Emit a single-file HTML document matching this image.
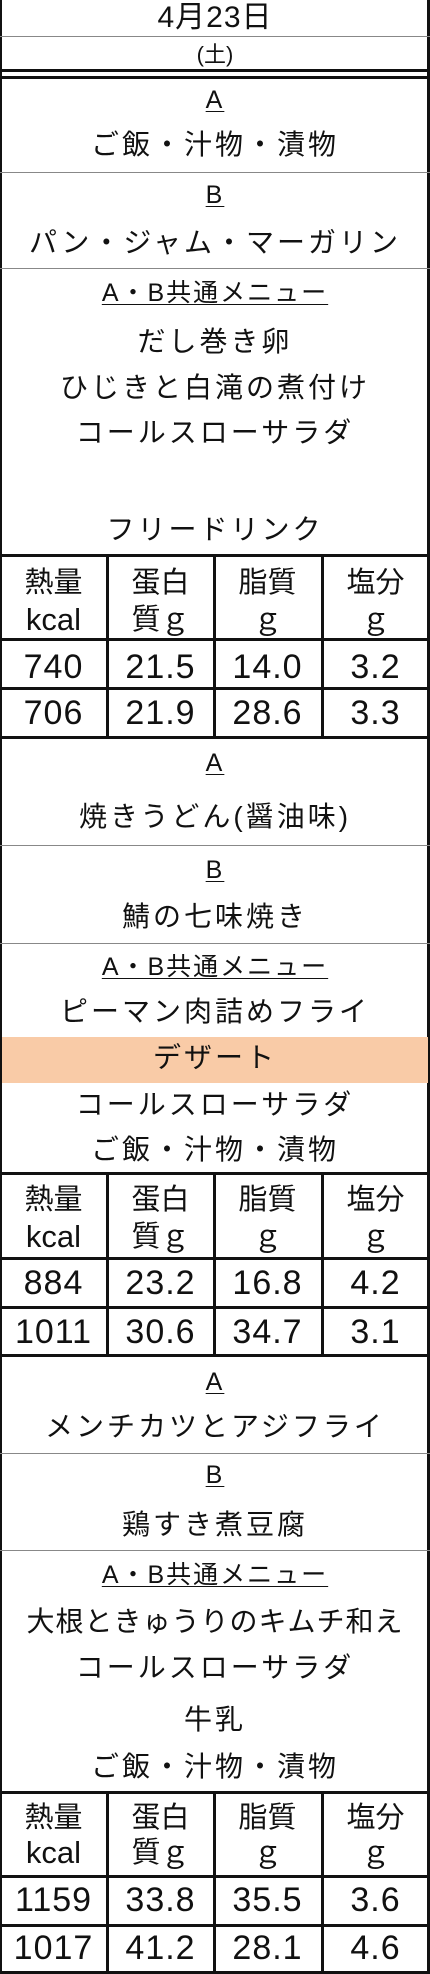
<!DOCTYPE html>
<html><head><meta charset="utf-8"><style>
body{margin:0;width:430px;height:1974px;background:#fff;position:relative;overflow:hidden;font-family:"Liberation Sans","Noto Sans CJK JP",sans-serif;color:#111}
.t{position:absolute;left:0;width:430px;text-align:center;height:40px;line-height:40px;font-size:28px;letter-spacing:3px;white-space:nowrap}
.l{font-size:25px;letter-spacing:2px}
.l span{text-decoration:underline;text-decoration-thickness:1px;text-underline-offset:3px}
.h{position:absolute;left:0;width:430px;height:1px;background:#888}
.k{position:absolute;left:0;width:430px;height:3px;background:#111}
.v{position:absolute;width:3px;background:#111}
.c{position:absolute;width:107px;text-align:center;height:40px;line-height:40px;font-size:29px;white-space:nowrap}
.n{font-size:34px;letter-spacing:1px}
.or{position:absolute;left:2px;width:426px;background:#f9cba7}
</style></head><body>
<div class="v" style="left:0;top:0;height:1974px;width:2px"></div>
<div class="v" style="left:427px;top:0;height:1974px"></div>
<div class="t" style="top:-2px;font-size:30px;letter-spacing:1px">4月23日</div>
<div class="h" style="top:36px"></div>
<div class="t" style="top:35px;font-size:22px;letter-spacing:0">(土)</div>
<div class="k" style="top:69px"></div>
<div class="k" style="top:76px"></div>

<div class="t l" style="top:80px"><span>A</span></div>
<div class="t" style="top:125px">ご飯・汁物・漬物</div>
<div class="h" style="top:172px"></div>
<div class="t l" style="top:175px"><span>B</span></div>
<div class="t" style="top:223px">パン・ジャム・マーガリン</div>
<div class="h" style="top:268px"></div>
<div class="t l" style="top:273px"><span>A・B共通メニュー</span></div>
<div class="t" style="top:322px">だし巻き卵</div>
<div class="t" style="top:368px">ひじきと白滝の煮付け</div>
<div class="t" style="top:413px">コールスローサラダ</div>
<div class="t" style="top:510px">フリードリンク</div>
<div class="k" style="top:554px"></div>

<div class="c" style="left:0;top:563px">熱量</div><div class="c" style="left:0;top:600px;font-size:31px">kcal</div>
<div class="c" style="left:107px;top:563px">蛋白</div><div class="c" style="left:107px;top:600px">質ｇ</div>
<div class="c" style="left:214px;top:563px">脂質</div><div class="c" style="left:214px;top:600px">ｇ</div>
<div class="c" style="left:322px;top:563px">塩分</div><div class="c" style="left:322px;top:600px">ｇ</div>
<div class="k" style="top:638px"></div>
<div class="c n" style="left:0;top:647px">740</div><div class="c n" style="left:107px;top:647px">21.5</div><div class="c n" style="left:214px;top:647px">14.0</div><div class="c n" style="left:322px;top:647px">3.2</div>
<div class="k" style="top:687px"></div>
<div class="c n" style="left:0;top:693px">706</div><div class="c n" style="left:107px;top:693px">21.9</div><div class="c n" style="left:214px;top:693px">28.6</div><div class="c n" style="left:322px;top:693px">3.3</div>
<div class="k" style="top:736px"></div>
<div class="v" style="left:106px;top:554px;height:184px"></div>
<div class="v" style="left:213px;top:554px;height:184px"></div>
<div class="v" style="left:321px;top:554px;height:184px"></div>

<div class="t l" style="top:743px"><span>A</span></div>
<div class="t" style="top:797px">焼きうどん(醤油味)</div>
<div class="h" style="top:845px"></div>
<div class="t l" style="top:850px"><span>B</span></div>
<div class="t" style="top:897px">鯖の七味焼き</div>
<div class="h" style="top:943px"></div>
<div class="t l" style="top:947px"><span>A・B共通メニュー</span></div>
<div class="t" style="top:992px">ピーマン肉詰めフライ</div>
<div class="or" style="top:1037px;height:46px"></div>
<div class="t" style="top:1038px">デザート</div>
<div class="t" style="top:1085px">コールスローサラダ</div>
<div class="t" style="top:1130px">ご飯・汁物・漬物</div>
<div class="k" style="top:1172px"></div>

<div class="c" style="left:0;top:1180px">熱量</div><div class="c" style="left:0;top:1217px;font-size:31px">kcal</div>
<div class="c" style="left:107px;top:1180px">蛋白</div><div class="c" style="left:107px;top:1217px">質ｇ</div>
<div class="c" style="left:214px;top:1180px">脂質</div><div class="c" style="left:214px;top:1217px">ｇ</div>
<div class="c" style="left:322px;top:1180px">塩分</div><div class="c" style="left:322px;top:1217px">ｇ</div>
<div class="k" style="top:1257px"></div>
<div class="c n" style="left:0;top:1263px">884</div><div class="c n" style="left:107px;top:1263px">23.2</div><div class="c n" style="left:214px;top:1263px">16.8</div><div class="c n" style="left:322px;top:1263px">4.2</div>
<div class="k" style="top:1306px"></div>
<div class="c n" style="left:0;top:1312px">1011</div><div class="c n" style="left:107px;top:1312px">30.6</div><div class="c n" style="left:214px;top:1312px">34.7</div><div class="c n" style="left:322px;top:1312px">3.1</div>
<div class="k" style="top:1354px"></div>
<div class="v" style="left:106px;top:1172px;height:184px"></div>
<div class="v" style="left:213px;top:1172px;height:184px"></div>
<div class="v" style="left:321px;top:1172px;height:184px"></div>

<div class="t l" style="top:1362px"><span>A</span></div>
<div class="t" style="top:1407px">メンチカツとアジフライ</div>
<div class="h" style="top:1453px"></div>
<div class="t l" style="top:1455px"><span>B</span></div>
<div class="t" style="top:1505px">鶏すき煮豆腐</div>
<div class="h" style="top:1550px"></div>
<div class="t l" style="top:1555px"><span>A・B共通メニュー</span></div>
<div class="t" style="top:1602px;letter-spacing:1px">大根ときゅうりのキムチ和え</div>
<div class="t" style="top:1648px">コールスローサラダ</div>
<div class="t" style="top:1700px">牛乳</div>
<div class="t" style="top:1747px">ご飯・汁物・漬物</div>
<div class="k" style="top:1791px"></div>

<div class="c" style="left:0;top:1798px">熱量</div><div class="c" style="left:0;top:1833px;font-size:31px">kcal</div>
<div class="c" style="left:107px;top:1798px">蛋白</div><div class="c" style="left:107px;top:1833px">質ｇ</div>
<div class="c" style="left:214px;top:1798px">脂質</div><div class="c" style="left:214px;top:1833px">ｇ</div>
<div class="c" style="left:322px;top:1798px">塩分</div><div class="c" style="left:322px;top:1833px">ｇ</div>
<div class="k" style="top:1875px"></div>
<div class="c n" style="left:0;top:1880px">1159</div><div class="c n" style="left:107px;top:1880px">33.8</div><div class="c n" style="left:214px;top:1880px">35.5</div><div class="c n" style="left:322px;top:1880px">3.6</div>
<div class="k" style="top:1924px"></div>
<div class="c n" style="left:0;top:1928px">1017</div><div class="c n" style="left:107px;top:1928px">41.2</div><div class="c n" style="left:214px;top:1928px">28.1</div><div class="c n" style="left:322px;top:1928px">4.6</div>
<div class="k" style="top:1971px"></div>
<div class="v" style="left:106px;top:1791px;height:183px"></div>
<div class="v" style="left:213px;top:1791px;height:183px"></div>
<div class="v" style="left:321px;top:1791px;height:183px"></div>
</body></html>
